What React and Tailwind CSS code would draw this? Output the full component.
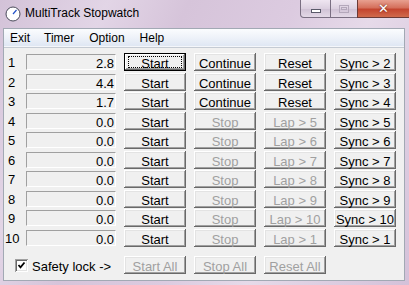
import React from 'react';

const rows = [
  { n: '1', v: '2.8', mid: 'Continue', on: true, lap: 'Reset', sync: 'Sync > 2', gap: 'mt-0', focus: true },
  { n: '2', v: '4.4', mid: 'Continue', on: true, lap: 'Reset', sync: 'Sync > 3', gap: 'mt-[2px]' },
  { n: '3', v: '1.7', mid: 'Continue', on: true, lap: 'Reset', sync: 'Sync > 4', gap: 'mt-px' },
  { n: '4', v: '0.0', mid: 'Stop', on: false, lap: 'Lap > 5', sync: 'Sync > 5', gap: 'mt-[2px]' },
  { n: '5', v: '0.0', mid: 'Stop', on: false, lap: 'Lap > 6', sync: 'Sync > 6', gap: 'mt-px' },
  { n: '6', v: '0.0', mid: 'Stop', on: false, lap: 'Lap > 7', sync: 'Sync > 7', gap: 'mt-[2px]' },
  { n: '7', v: '0.0', mid: 'Stop', on: false, lap: 'Lap > 8', sync: 'Sync > 8', gap: 'mt-px' },
  { n: '8', v: '0.0', mid: 'Stop', on: false, lap: 'Lap > 9', sync: 'Sync > 9', gap: 'mt-[2px]' },
  { n: '9', v: '0.0', mid: 'Stop', on: false, lap: 'Lap > 10', sync: 'Sync > 10', gap: 'mt-px' },
  { n: '10', v: '0.0', mid: 'Stop', on: false, lap: 'Lap > 1', sync: 'Sync > 1', gap: 'mt-[2px]' },
];

function Btn({ children, disabled, focus }) {
  const sh = focus
    ? 'shadow-[inset_0_0_0_1px_#000000,inset_-2px_-2px_0_#696969,inset_2px_2px_0_#ffffff,inset_-3px_-3px_0_#a0a0a0]'
    : 'shadow-[inset_-1px_-1px_0_#696969,inset_1px_1px_0_#ffffff,inset_-2px_-2px_0_#a0a0a0,inset_2px_2px_0_#e3e3e3]';
  return (
    <div
      className={`relative w-[62px] h-[18px] bg-[#f0f0f0] flex items-center justify-center leading-none ${sh} ${
        disabled ? 'text-[#a0a0a0]' : 'text-black'
      }`}
    >
      {focus && <span className="absolute left-[4px] right-[4px] top-[3px] bottom-[3px] border border-dotted border-black" />}
      <span className="relative top-[1px] whitespace-nowrap">{children}</span>
    </div>
  );
}

function StopwatchIcon() {
  return (
    <svg width="16" height="16" viewBox="0 0 16 16">
      <circle cx="8" cy="8" r="7" fill="#ffffff" stroke="#4a4a5a" strokeWidth="1" />
      <line x1="8" y1="8" x2="11.5" y2="4" stroke="#2050c8" strokeWidth="1.2" />
    </svg>
  );
}

export default function App() {
  return (
    <div
      className="w-[409px] h-[285px] overflow-hidden bg-[linear-gradient(115deg,#d3c2d8_0%,#e2d5e6_20%,#d6c4da_35%,#dccbe0_55%,#e6dae9_70%,#d4c1d9_100%)] flex flex-col"
    >
      {/* Title bar */}
      <div className="h-[28px] flex items-start shrink-0">
        <div className="ml-[5px] mt-[6px]">
          <StopwatchIcon />
        </div>
        <div
          className="ml-[4px] mt-[5px] text-[12px] leading-[16px] text-black font-['Liberation_Sans',sans-serif]"
        >
          MultiTrack Stopwatch
        </div>
        <div className="ml-auto flex h-[18px]">
          <div className="w-[31px] h-[18px] rounded-bl-[4px] border border-t-0 border-[#7a6f82] bg-[linear-gradient(#efe6f1,#dcd0e0_50%,#cfc1d4_51%,#e4d9e7)] flex items-center justify-center">
            <div className="w-[10px] h-[4px] mt-[5px] bg-white border border-[#5a5a6a]" />
          </div>
          <div className="w-[26px] h-[18px] border-b border-[#7a6f82] bg-[linear-gradient(#efe6f1,#dcd0e0_50%,#cfc1d4_51%,#e4d9e7)] flex items-center justify-center">
            <div className="w-[10px] h-[8px] border border-[#b4a8bb] flex items-center justify-center">
              <div className="w-[6px] h-[3px] border border-[#b4a8bb]" />
            </div>
          </div>
          <div className="w-[52px] h-[18px] border border-t-0 border-r-0 border-[#6b3a36] bg-[linear-gradient(#e8a090,#d5705c_45%,#c4452f_55%,#d06a4c)] flex items-center justify-center">
            <span className="text-white font-bold text-[13px] leading-none font-['DejaVu_Sans',sans-serif] [text-shadow:0_0_2px_#5a1a10]">✕</span>
          </div>
        </div>
      </div>

      {/* Client */}
      <div className="ml-[3px] w-[402px] h-[253px] border border-[#a2a9b4] flex flex-col shrink-0">
        <div className="h-[18px] shrink-0 bg-[linear-gradient(#fbfcfe,#eef2f9_50%,#dfe7f3)] border-b border-[#f4f6fa] flex items-center text-[12px] font-['Liberation_Sans',sans-serif] text-black">
          <span className="ml-[6px]">Exit</span>
          <span className="ml-[14px]">Timer</span>
          <span className="ml-[15px]">Option</span>
          <span className="ml-[15px]">Help</span>
        </div>
        <div className="flex-1 bg-[#f0f0f0] border-t border-[#c5cbd3] pt-[5px] text-[13px] font-['Liberation_Sans',sans-serif]">
          {rows.map((r) => (
            <div key={r.n} className={`flex items-center h-[18px] ${r.gap}`}>
              <div className={`w-[22px] leading-none ${r.n === '10' ? 'pl-[1px]' : 'pl-[4px]'}`}>{r.n}</div>
              <div className="w-[90px] h-[16px] border border-t-[#a0a0a0] border-l-[#a0a0a0] border-b-white border-r-white flex items-center justify-end pr-[1px] leading-none">
                <span className="relative top-[1px]">{r.v}</span>
              </div>
              <div className="ml-[8px] flex gap-[8px]">
                <Btn focus={r.focus}>Start</Btn>
                <Btn disabled={!r.on}>{r.mid}</Btn>
                <Btn disabled={!r.on}>{r.lap}</Btn>
                <Btn>{r.sync}</Btn>
              </div>
            </div>
          ))}
          <div className="flex items-center h-[18px] mt-[9px]">
            <div className="w-[112px] flex items-center pl-[11px]">
              <div className="w-[13px] h-[13px] bg-white shadow-[inset_1px_1px_0_#a0a0a0,inset_-1px_-1px_0_#ffffff,inset_2px_2px_0_#696969,inset_-2px_-2px_0_#e3e3e3] flex items-center justify-center">
                <svg width="9" height="9" viewBox="0 0 9 9">
                  <path d="M1.5 4 L3.5 6.3 L7.5 1.5" stroke="#000" strokeWidth="1.8" fill="none" />
                </svg>
              </div>
              <span className="ml-[4px] leading-none whitespace-nowrap relative top-[1px]">Safety lock -&gt;</span>
            </div>
            <div className="ml-[8px] flex gap-[8px]">
              <Btn disabled>Start All</Btn>
              <Btn disabled>Stop All</Btn>
              <Btn disabled>Reset All</Btn>
            </div>
          </div>
        </div>
      </div>
    </div>
  );
}
